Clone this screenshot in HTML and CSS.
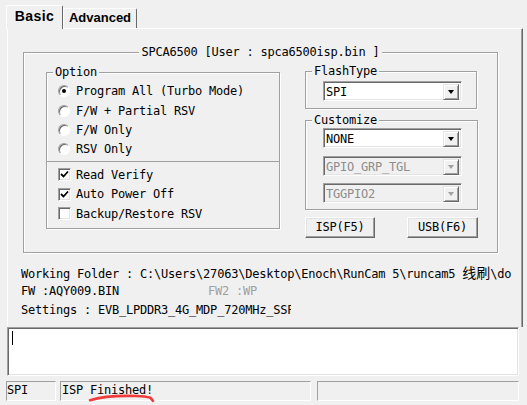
FILE: index.html
```html
<!DOCTYPE html>
<html lang="zh">
<head>
  <meta charset="UTF-8" />
  <meta name="viewport" content="width=device-width, initial-scale=1.0" />
  <title>SPCA6500 ISP</title>
  <link rel="stylesheet" href="styles.css">
</head>
<body>

<div class="tabs">
  <div class="tab active">Basic</div>
  <div class="tab">Advanced</div>
</div>

<div class="panel">
  <div class="group main-group">
    <span class="group-title centered">SPCA6500 [User : spca6500isp.bin ]</span>
    <div class="group-body">

      <div class="group option-group">
        <span class="group-title">Option</span>
        <div class="option-list">
          <div class="row"><span class="radio checked"></span>Program All (Turbo Mode)</div>
          <div class="row"><span class="radio"></span>F/W + Partial RSV</div>
          <div class="row"><span class="radio"></span>F/W Only</div>
          <div class="row"><span class="radio"></span>RSV Only</div>
        </div>
        <div class="option-list checks">
          <div class="row"><span class="check"><svg width="9" height="9" viewBox="0 0 9 9"><path d="M1 4 L3.5 6.5 L8 1.5" fill="none" stroke="#000" stroke-width="1.8"/></svg></span>Read Verify</div>
          <div class="row"><span class="check"><svg width="9" height="9" viewBox="0 0 9 9"><path d="M1 4 L3.5 6.5 L8 1.5" fill="none" stroke="#000" stroke-width="1.8"/></svg></span>Auto Power Off</div>
          <div class="row"><span class="check"></span>Backup/Restore RSV</div>
        </div>
      </div>

      <div class="side">
        <div class="group flash-group">
          <span class="group-title">FlashType</span>
          <div class="combo"><span class="combo-text">SPI</span><span class="drop"><i></i></span></div>
        </div>
        <div class="group custom-group">
          <span class="group-title">Customize</span>
          <div class="combo"><span class="combo-text">NONE</span><span class="drop"><i></i></span></div>
          <div class="combo disabled"><span class="combo-text">GPIO_GRP_TGL</span><span class="drop"><i></i></span></div>
          <div class="combo disabled"><span class="combo-text">TGGPIO2</span><span class="drop"><i></i></span></div>
        </div>
        <div class="buttons">
          <div class="btn">ISP(F5)</div>
          <div class="btn wide">USB(F6)</div>
        </div>
      </div>

    </div>
  </div>

  <div class="info">
    <div class="info-line">Working Folder : C:\Users\27063\Desktop\Enoch\RunCam 5\runcam5 <span class="cjk">线刷</span>\do</div>
    <div class="info-line"><span class="fw">FW :AQY009.BIN</span><span class="fw2">FW2 :WP</span></div>
    <div class="info-line settings">Settings : EVB_LPDDR3_4G_MDP_720MHz_SSP</div>
  </div>
</div>

<div class="log"><span class="caret"></span></div>

<div class="statusbar">
  <div class="status-cell first">SPI</div>
  <div class="status-cell middle">ISP Finished!</div>
  <div class="status-cell last"></div>
</div>

<svg class="scribble" width="72" height="12" viewBox="0 0 72 12">
  <path d="M4 8.2 C14 5 34 3.6 50 4 C58 4.2 62 5 64.5 5.8 L67 8.8" fill="none" stroke="#f23b3b" stroke-width="2.6" stroke-linecap="round" stroke-linejoin="round"/>
</svg>

</body>
</html>
```

FILE: styles.css
```css
body {
  margin: 0;
  width: 527px;
  height: 405px;
  overflow: hidden;
  position: relative;
  background-color: #f0f0f0;
  font-family: "DejaVu Sans Mono", monospace;
  font-size: 12px;
  letter-spacing: -0.22px;
  color: #000;
}

/* tabs */
.tabs {
  display: flex;
  align-items: flex-end;
  height: 28px;
  padding-left: 6px;
  position: relative;
  z-index: 1;
}

.tab {
  box-sizing: border-box;
  width: 74px;
  height: 20px;
  line-height: 18px;
  text-align: center;
  font-family: "Liberation Sans", Arial, sans-serif;
  font-weight: bold;
  font-size: 13px;
  letter-spacing: 0;
  background-color: #f0f0f0;
  border: 1px solid;
  border-bottom: none;
  border-color: #fff #696969 #696969 #fff;
  border-radius: 2px 2px 0 0;
}

.tab.active {
  width: 57px;
  height: 24px;
  line-height: 21px;
  margin-bottom: -1px;
  font-size: 14px;
  letter-spacing: 0.4px;
}

.panel {
  box-sizing: border-box;
  margin-left: 7px;
  width: 516px;
  height: 299px;
  padding-left: 13px;
  border-top: 1px solid #fff;
  border-left: 1px solid #fff;
  border-right: 1px solid #696969;
  box-shadow: inset -1px 0 0 #a0a0a0;
  overflow: hidden;
}

/* group boxes */
.group {
  box-sizing: border-box;
  border: 1px solid #a0a0a0;
  box-shadow: 1px 1px 0 #fff, inset 1px 1px 0 #fff;
}

.group-title {
  display: block;
  width: fit-content;
  margin: -8px 0 0 6px;
  padding: 0 2px;
  line-height: 15px;
  background-color: #f0f0f0;
}

.group-title.centered {
  margin-left: auto;
  margin-right: auto;
}

.main-group {
  width: 475px;
  margin: 23px 0 0 2px;
}

.group-body {
  display: flex;
  align-items: flex-start;
  gap: 25px;
  padding: 12px 0 14px 22px;
}

.option-group {
  width: 234px;
  height: 157px;
}

.option-list {
  padding: 1.5px 0 2px 11px;
}

.option-list.checks {
  border-top: 1px solid #a0a0a0;
  padding-top: 3px;
}

.row {
  display: flex;
  align-items: center;
  height: 19.4px;
  white-space: nowrap;
}

.radio {
  box-sizing: border-box;
  width: 12px;
  height: 12px;
  margin-right: 6px;
  border-radius: 50%;
  border: 1px solid;
  border-color: #a0a0a0 #fff #fff #a0a0a0;
  box-shadow: inset 1px 1px 0 #696969;
  background-color: #fff;
  display: flex;
  align-items: center;
  justify-content: center;
}

.radio.checked::after {
  content: "";
  width: 4px;
  height: 4px;
  border-radius: 50%;
  background-color: #000;
}

.check {
  box-sizing: border-box;
  width: 13px;
  height: 13px;
  margin-right: 5px;
  border: 1px solid;
  border-color: #a0a0a0 #fff #fff #a0a0a0;
  box-shadow: inset 1px 1px 0 #696969, inset -1px -1px 0 #e3e3e3;
  background-color: #fff;
  display: flex;
  align-items: center;
  justify-content: center;
}

/* right column */
.side {
  width: 173px;
  margin-top: -1px;
  display: flex;
  flex-direction: column;
}

.flash-group {
  width: 172px;
  height: 38px;
}

.custom-group {
  width: 173px;
  height: 90px;
  margin-top: 11px;
}

.combo {
  box-sizing: border-box;
  display: flex;
  width: 139px;
  height: 20px;
  margin: 2px 0 0 17px;
  padding: 2px;
  border: 1px solid;
  border-color: #a0a0a0 #fff #fff #a0a0a0;
  box-shadow: inset 1px 1px 0 #696969, inset -1px -1px 0 #e3e3e3;
  background-color: #fff;
}

.custom-group .combo {
  margin-top: 8px;
}

.custom-group .group-title + .combo {
  margin-top: 0;
}

.custom-group .combo:last-child {
  margin-top: 7px;
}

.combo-text {
  flex: 1;
  line-height: 16px;
  white-space: nowrap;
}

.drop {
  box-sizing: border-box;
  width: 16px;
  height: 16px;
  border: 1px solid;
  border-color: #e3e3e3 #696969 #696969 #e3e3e3;
  box-shadow: inset 1px 1px 0 #fff, inset -1px -1px 0 #a0a0a0;
  background-color: #f0f0f0;
  display: flex;
  align-items: center;
  justify-content: center;
}

.drop i {
  width: 0;
  height: 0;
  border-left: 3.5px solid transparent;
  border-right: 3.5px solid transparent;
  border-top: 4px solid #000;
}

.combo.disabled {
  background-color: #f0f0f0;
  color: #8d8d8d;
}

.combo.disabled .drop i {
  border-top-color: #a0a0a0;
}

.buttons {
  display: flex;
  justify-content: space-between;
  margin-top: 7px;
}

.btn {
  box-sizing: border-box;
  width: 70px;
  height: 21px;
  line-height: 19px;
  text-align: center;
  border: 1px solid;
  border-color: #fff #696969 #696969 #fff;
  box-shadow: inset -1px -1px 0 #a0a0a0, inset 1px 1px 0 #e3e3e3;
  background-color: #f0f0f0;
}

.btn.wide {
  width: 71px;
}

/* info lines */
.info {
  margin-top: 10px;
}

.info-line {
  height: 19px;
  line-height: 19px;
  white-space: nowrap;
  overflow: hidden;
}

.cjk {
  font-family: "Noto Sans CJK SC", sans-serif;
  font-size: 14px;
  letter-spacing: 0;
}

.fw {
  display: inline-block;
  width: 187px;
}

.fw2 {
  color: #a0a0a0;
}

.settings {
  width: 270px;
}

/* log box */
.log {
  box-sizing: border-box;
  width: 512px;
  height: 49px;
  margin-left: 7px;
  padding: 3px 0 0 3px;
  border: 1px solid;
  border-color: #a0a0a0 #fff #fff #a0a0a0;
  box-shadow: inset 1px 1px 0 #696969, inset -1px -1px 0 #e3e3e3;
  background-color: #fff;
}

.caret {
  display: block;
  width: 1px;
  height: 14px;
  margin-left: 1px;
  background-color: #000;
}

/* status bar */
.statusbar {
  display: flex;
  margin-top: 5px;
}

.status-cell {
  box-sizing: border-box;
  height: 20px;
  line-height: 16px;
  padding-left: 1px;
  white-space: nowrap;
  border: 1px solid;
  border-color: #a0a0a0 #fff #fff #a0a0a0;
}

.status-cell.first {
  width: 50px;
  margin-left: 6px;
  padding-left: 0;
}

.status-cell.middle {
  width: 251px;
  margin-left: 4px;
}

.status-cell.last {
  width: 202px;
  margin-left: 6px;
}

.scribble {
  position: absolute;
  left: 86px;
  top: 392px;
}
```
